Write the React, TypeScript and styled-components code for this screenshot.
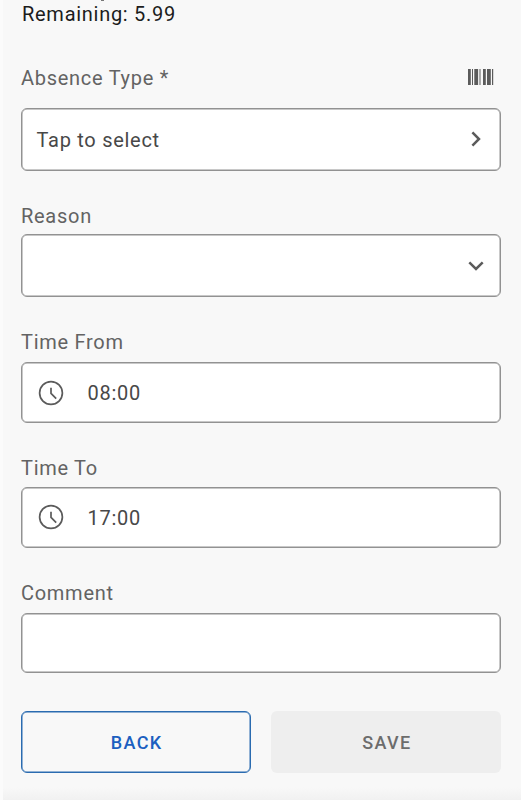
import React from "react";
import styled, { createGlobalStyle } from "styled-components";

const GlobalStyle = createGlobalStyle`
  * { box-sizing: border-box; }
  body { margin: 0; background: #f8f8f8; }
`;

const Screen = styled.main`
  height: 800px;
  overflow: hidden;
  padding: 0 20px 0 20.5px;
  display: flex;
  flex-direction: column;
  background: linear-gradient(to bottom, #f8f8f8 787px, #f1f1f1 800px);
  box-shadow: inset 3px 0 0 #fbfbfb;
  font-family: Roboto, sans-serif;
  font-size: 20px;
  color: #636363;
`;

/* The tail of the line scrolled off above shows at the top edge. */
const Balance = styled.p`
  position: relative;
  margin: 0;
  height: 27.5px;
  padding-left: 1.5px;
  line-height: 28px;
  color: #1c1c1c;
  letter-spacing: 0.72px;

  &::before {
    content: "";
    position: absolute;
    top: 0;
    left: 80.5px;
    width: 3px;
    height: 1px;
    background: #777;
  }
`;

const Field = styled.section<{ $top: number; $gap: number }>`
  flex: none;
  margin-top: ${(p) => p.$top}px;
  display: flex;
  flex-direction: column;
  gap: ${(p) => p.$gap}px;
`;

const LabelRow = styled.div`
  height: 24px;
  padding: 0 7px 0 0.5px;
  display: flex;
  align-items: center;
  justify-content: space-between;
`;

const Label = styled.label`
  line-height: 24px;
  letter-spacing: 0.72px;
`;

const Control = styled.div<{ $height: number }>`
  height: ${(p) => p.$height}px;
  padding: 0 16.5px 0 15px;
  display: flex;
  align-items: center;
  border: 1px solid #929292;
  border-radius: 6px;
  box-shadow: inset 0 0 0 0.5px #929292;
  background: #fff;
  color: #484848;
`;

const Value = styled.span`
  flex: 1;
  padding-top: 1px;
  letter-spacing: 0.72px;
`;

const Icon = styled.svg`
  flex: none;
  display: block;
  color: #5b5b5b;
`;

const BarcodeIcon = styled(Icon)`
  margin-bottom: 2px;
`;

const ClockIcon = styled(Icon)`
  margin: 0 23.5px 0 1.5px;
`;

const Actions = styled.footer`
  flex: none;
  margin-top: 38px;
  display: grid;
  grid-template-columns: 1fr 1fr;
  gap: 20px;
`;

const Button = styled.button<{ $outlined?: boolean }>`
  height: 62px;
  padding: 1px 0 0 2px;
  border: ${(p) => (p.$outlined ? "1px solid #2a6bb0" : "0")};
  border-radius: 6px;
  box-shadow: ${(p) => (p.$outlined ? "inset 0 0 0 0.5px #2a6bb0" : "none")};
  background: ${(p) => (p.$outlined ? "transparent" : "#eeeeee")};
  color: ${(p) => (p.$outlined ? "#1c5fc0" : "#6c6c6c")};
  font: 500 18px Roboto, sans-serif;
  letter-spacing: 1.4px;
`;

const Barcode = () => (
  <BarcodeIcon width="26" height="16" viewBox="0 0 26 16" fill="currentColor">
    <path d="M0 0h2.8v16H0zM4 0h1v16H4zM6.3 0h3.8v16H6.3zM11.5 0h1v16h-1zM15 0h2.8v16H15zM19 0h3.8v16H19zM24 0h1.2v16H24z" />
  </BarcodeIcon>
);

const Chevron = ({ down }: { down?: boolean }) => (
  <Icon width="16" height="16" viewBox="0 0 16 16" fill="none" stroke="currentColor" strokeWidth="2.5">
    <path d={down ? "M1.3 4.4 8 11 14.7 4.4" : "M4.4 1.3 11 8 4.4 14.7"} />
  </Icon>
);

const Clock = () => (
  <ClockIcon width="26" height="26" viewBox="0 0 26 26" fill="none" stroke="currentColor" strokeWidth="1.7">
    <circle cx="13" cy="13" r="11.4" />
    <path d="M13 7.8v5.6l5.2 5.2" />
  </ClockIcon>
);

export default function App() {
  return (
    <>
      <GlobalStyle />
      <Screen>
        <Balance>Remaining: 5.99</Balance>
        <Field $top={38} $gap={18}>
          <LabelRow>
            <Label>Absence Type *</Label>
            <Barcode />
          </LabelRow>
          <Control $height={63}>
            <Value>Tap to select</Value>
            <Chevron />
          </Control>
        </Field>
        <Field $top={33.5} $gap={6}>
          <LabelRow>
            <Label>Reason</Label>
          </LabelRow>
          <Control $height={63}>
            <Value />
            <Chevron down />
          </Control>
        </Field>
        <Field $top={33} $gap={8}>
          <LabelRow>
            <Label>Time From</Label>
          </LabelRow>
          <Control $height={61}>
            <Clock />
            <Value>08:00</Value>
          </Control>
        </Field>
        <Field $top={32.5} $gap={7.4}>
          <LabelRow>
            <Label>Time To</Label>
          </LabelRow>
          <Control $height={61}>
            <Clock />
            <Value>17:00</Value>
          </Control>
        </Field>
        <Field $top={33.1} $gap={8}>
          <LabelRow>
            <Label>Comment</Label>
          </LabelRow>
          <Control $height={60} />
        </Field>
        <Actions>
          <Button $outlined>BACK</Button>
          <Button disabled>SAVE</Button>
        </Actions>
      </Screen>
    </>
  );
}
